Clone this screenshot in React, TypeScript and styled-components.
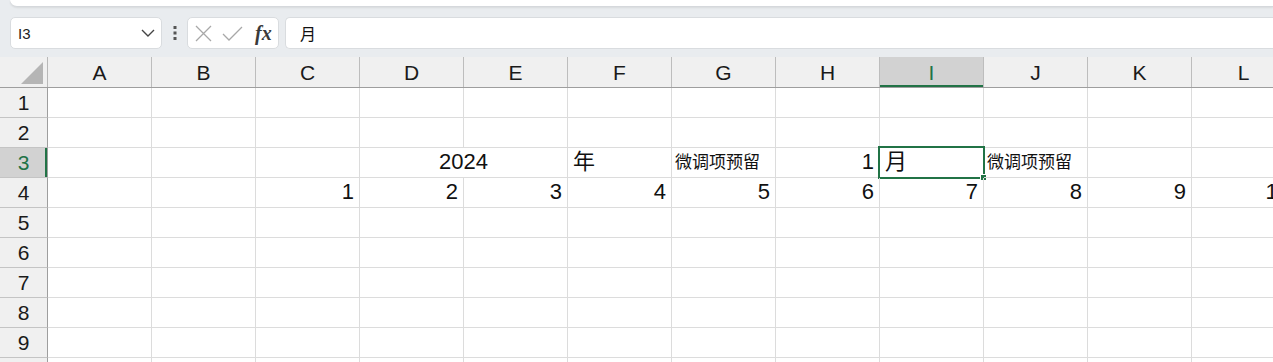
import * as React from "react";
import styled, { createGlobalStyle, css } from "styled-components";

const GREEN = "#217346";
const COLS = ["A", "B", "C", "D", "E", "F", "G", "H", "I", "J", "K", "L"];
const COL_W = 104;

type Align = "left" | "center" | "right";

type CellData = {
  col: number;
  span?: number;
  text?: string;
  align?: Align;
  small?: boolean;
  selected?: boolean;
};

const row3: CellData[] = [
  { col: 0 },
  { col: 1 },
  { col: 2 },
  { col: 3, span: 2, text: "2024", align: "center" },
  { col: 5, text: "年", align: "left" },
  { col: 6, text: "微调项预留", align: "left", small: true },
  { col: 7, text: "1", align: "right" },
  { col: 8, text: "月", align: "left", selected: true },
  { col: 9, text: "微调项预留", align: "left", small: true },
  { col: 10 },
  { col: 11 },
];

const row4: CellData[] = COLS.map((_, i) =>
  i < 2 ? { col: i } : { col: i, text: String(i - 1), align: "right" as Align }
);

const emptyRow: CellData[] = COLS.map((_, i) => ({ col: i }));

const ROWS: CellData[][] = [
  emptyRow,
  emptyRow,
  row3,
  row4,
  emptyRow,
  emptyRow,
  emptyRow,
  emptyRow,
  emptyRow,
];

const GlobalStyle = createGlobalStyle`
  html, body {
    margin: 0;
    padding: 0;
    background: #e9ecef;
    overflow: hidden;
  }
  * {
    box-sizing: border-box;
  }
`;

const Page = styled.div`
  width: 1273px;
  height: 362px;
  overflow: hidden;
  background: #e9ecef;
  font-family: "Liberation Sans", "Noto Sans CJK SC", sans-serif;
`;

const RibbonEdge = styled.div`
  height: 7px;
  margin-left: 10px;
  background: #fff;
  border-bottom: 1px solid #d5d8dc;
  border-bottom-left-radius: 8px;
  box-shadow: 0 1px 2px rgba(0, 0, 0, 0.08);
`;

const FormulaBar = styled.div`
  display: flex;
  align-items: center;
  height: 32px;
  margin: 10px 0 8px 10px;
`;

const Box = styled.div`
  height: 32px;
  background: #fff;
  border: 1px solid #d9dcdf;
  border-radius: 5px;
  display: flex;
  align-items: center;
`;

const NameBox = styled(Box)`
  width: 152px;
  padding: 0 6px 0 7px;
  justify-content: space-between;
  font-size: 15px;
  color: #222;
`;

const DotsWrap = styled.div`
  width: 25px;
  display: flex;
  justify-content: center;
`;

const FxBox = styled(Box)`
  width: 92px;
  padding: 0 6px 0 7px;
  gap: 10px;
`;

const FxLabel = styled.span`
  font-family: "Liberation Serif", serif;
  font-style: italic;
  font-weight: bold;
  font-size: 20px;
  color: #3a3a3a;
  margin-left: 2px;
  line-height: 1;
`;

const FormulaInput = styled(Box)`
  flex: 1;
  margin-left: 6px;
  border-right: none;
  border-radius: 5px 0 0 5px;
  padding-left: 14px;
  font-family: "Noto Sans CJK SC", sans-serif;
  font-size: 16px;
  color: #111;
`;

const Sheet = styled.div`
  display: flex;
  flex-direction: column;
  background: #fff;
`;

const SheetRow = styled.div`
  display: flex;
  height: 30px;
  flex-shrink: 0;
`;

const HeaderRow = styled(SheetRow)`
  height: 31px;
  background: #f0f0f0;
  border-bottom: 1px solid #9e9e9e;
`;

const Corner = styled.div`
  width: 48px;
  flex-shrink: 0;
  border-right: 1px solid #b8b8b8;
  display: flex;
  align-items: flex-end;
  justify-content: flex-end;
  padding: 0 4px 3px 0;
`;

const ColHeader = styled.div<{ $selected?: boolean }>`
  width: ${COL_W}px;
  flex-shrink: 0;
  border-right: 1px solid #bdbdbd;
  display: flex;
  align-items: center;
  justify-content: center;
  padding-top: 2px;
  font-size: 21px;
  color: #1a1a1a;
  ${(p) =>
    p.$selected &&
    css`
      background: #d2d2d2;
      color: ${GREEN};
      box-shadow: inset 0 -2px 0 ${GREEN};
    `}
`;

const RowHeader = styled.div<{ $selected?: boolean }>`
  width: 48px;
  flex-shrink: 0;
  background: #f0f0f0;
  border-right: 1px solid #9e9e9e;
  border-bottom: 1px solid #c4c4c4;
  display: flex;
  align-items: flex-end;
  justify-content: center;
  padding-bottom: 2px;
  font-size: 21px;
  line-height: 24px;
  color: #1a1a1a;
  ${(p) =>
    p.$selected &&
    css`
      background: #d2d2d2;
      color: ${GREEN};
      box-shadow: inset -2px 0 0 ${GREEN};
    `}
`;

const Cell = styled.div<{ $span: number; $align: Align; $small?: boolean }>`
  position: relative;
  width: ${(p) => p.$span * COL_W}px;
  flex-shrink: 0;
  border-right: 1px solid #dcdcdc;
  border-bottom: 1px solid #dcdcdc;
  display: flex;
  align-items: flex-end;
  justify-content: ${(p) =>
    p.$align === "left" ? "flex-start" : p.$align === "center" ? "center" : "flex-end"};
  padding: 0 5px 2px ${(p) => (p.$small ? "3px" : "5px")};
  white-space: nowrap;
  font-size: ${(p) => (p.$small ? "17px" : "22px")};
  line-height: ${(p) => (p.$small ? "24px" : "26px")};
  color: #111;
`;

const Selection = styled.div`
  position: absolute;
  top: -2px;
  left: -2px;
  width: 107px;
  height: 33px;
  border: 2px solid ${GREEN};
  pointer-events: none;
`;

const FillHandle = styled.div`
  position: absolute;
  right: -4px;
  bottom: -4px;
  width: 7px;
  height: 7px;
  background: ${GREEN};
  border: 1px solid #fff;
`;

const Chevron = () => (
  <svg width="14" height="8" viewBox="0 0 14 8">
    <path d="M1 1 L7 7 L13 1" fill="none" stroke="#444" strokeWidth="1.4" />
  </svg>
);

const VerticalDots = () => (
  <svg width="4" height="14" viewBox="0 0 4 14">
    <rect x="0.5" y="0" width="3" height="3" fill="#555" />
    <rect x="0.5" y="5.5" width="3" height="3" fill="#555" />
    <rect x="0.5" y="11" width="3" height="3" fill="#555" />
  </svg>
);

const CancelIcon = () => (
  <svg width="17" height="17" viewBox="0 0 17 17">
    <path d="M1 1 L16 16 M16 1 L1 16" stroke="#a8a8a8" strokeWidth="1.3" fill="none" />
  </svg>
);

const EnterIcon = () => (
  <svg width="21" height="17" viewBox="0 0 21 17">
    <path d="M1 9 L7 15 L20 2" stroke="#a8a8a8" strokeWidth="1.3" fill="none" />
  </svg>
);

const SelectAllTriangle = () => (
  <svg width="22" height="22" viewBox="0 0 22 22">
    <path d="M22 0 L22 22 L0 22 Z" fill="#b5b5b5" />
  </svg>
);

export default function App() {
  return (
    <Page>
      <GlobalStyle />
      <RibbonEdge />
      <FormulaBar>
        <NameBox>
          <span>I3</span>
          <Chevron />
        </NameBox>
        <DotsWrap>
          <VerticalDots />
        </DotsWrap>
        <FxBox>
          <CancelIcon />
          <EnterIcon />
          <FxLabel>fx</FxLabel>
        </FxBox>
        <FormulaInput>月</FormulaInput>
      </FormulaBar>
      <Sheet>
        <HeaderRow>
          <Corner>
            <SelectAllTriangle />
          </Corner>
          {COLS.map((c) => (
            <ColHeader key={c} $selected={c === "I"}>
              {c}
            </ColHeader>
          ))}
        </HeaderRow>
        {ROWS.map((cells, r) => (
          <SheetRow key={r}>
            <RowHeader $selected={r === 2}>{r + 1}</RowHeader>
            {cells.map((cell) => (
              <Cell
                key={cell.col}
                $span={cell.span ?? 1}
                $align={cell.align ?? "left"}
                $small={cell.small}
              >
                {cell.text}
                {cell.selected && (
                  <Selection>
                    <FillHandle />
                  </Selection>
                )}
              </Cell>
            ))}
          </SheetRow>
        ))}
        <SheetRow>
          <RowHeader />
          {emptyRow.map((cell) => (
            <Cell key={cell.col} $span={1} $align="left" />
          ))}
        </SheetRow>
      </Sheet>
    </Page>
  );
}
